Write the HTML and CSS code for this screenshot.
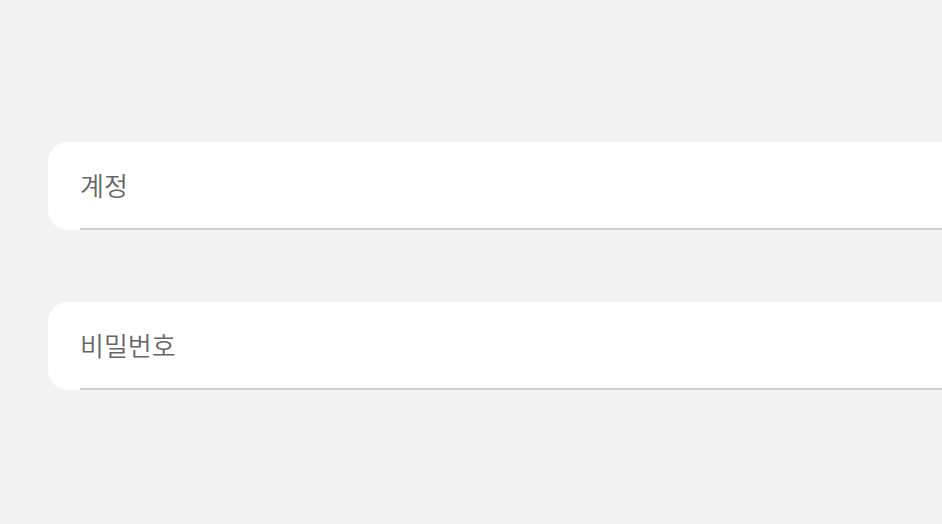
FILE: index.html
```html
<!DOCTYPE html>
<html lang="ko">
<head>
    <meta charset="UTF-8">
    <meta name="viewport" content="width=device-width, initial-scale=1.0">
    <link rel="stylesheet" href="styles.css">
    <title>로그인</title>
</head>
<body>
    <!-- 로그인 폼 -->
    <form class="login">
        <div class="field">
            <label class="field-inner" for="account">계정</label>
        </div>
        <div class="field">
            <label class="field-inner" for="password">비밀번호</label>
        </div>
    </form>
</body>
</html>
```

FILE: styles.css
```css
/* 로그인 화면 */
body {
    margin: 0;
    padding: 0;
    background-color: #f2f2f2;
    font-family: "Noto Sans CJK KR", "Noto Sans", sans-serif;
    overflow: hidden;
    height: 524px;
}

.login {
    display: flex;
    flex-direction: column;
    gap: 72px;
    padding: 142px 0 0 48px;
}

.field {
    background-color: #fff;
    height: 88px;
    border-radius: 20px 0 0 20px;
    padding-left: 32px;
    box-sizing: border-box;
}

.field-inner {
    display: flex;
    align-items: center;
    height: 100%;
    box-sizing: border-box;
    border-bottom: 2px solid #cfcfcf;
    padding-bottom: 2px;
    font-size: 26px;
    font-weight: 350;
    color: #666;
}
```
